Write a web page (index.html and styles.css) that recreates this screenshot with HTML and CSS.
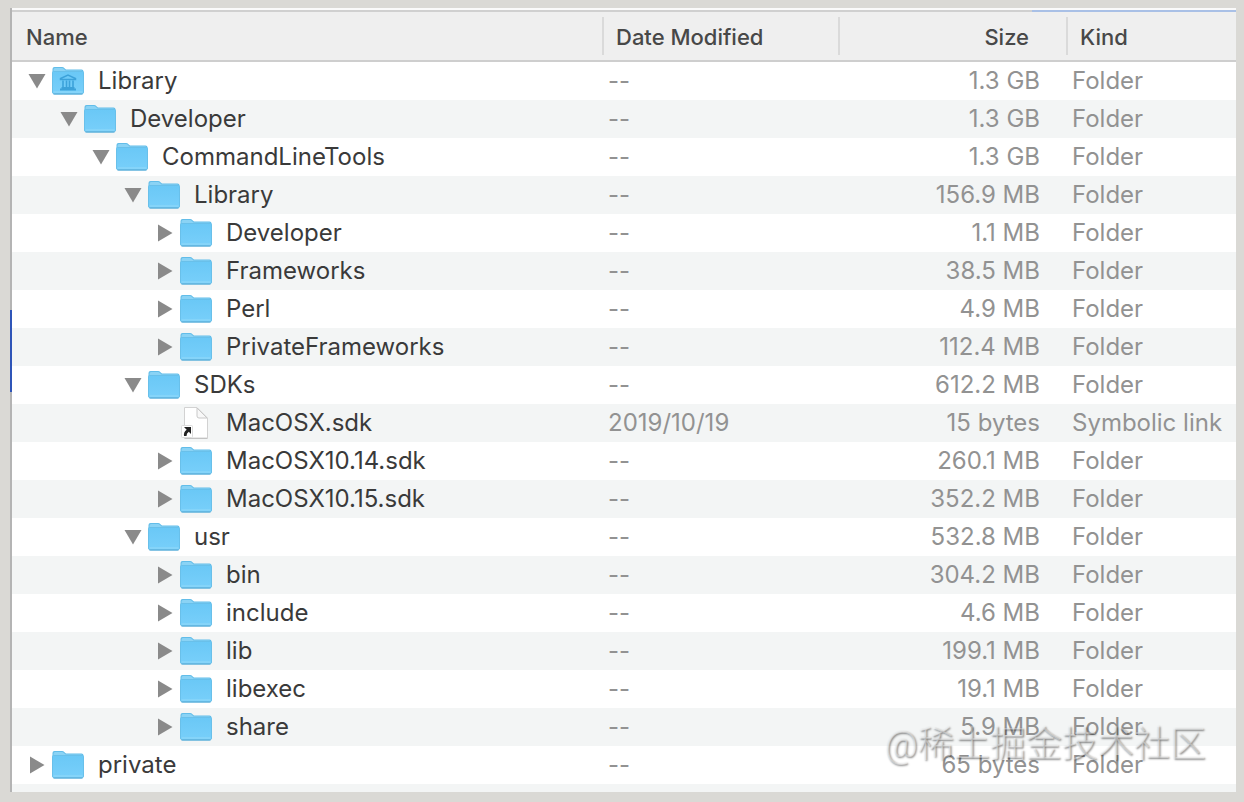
FILE: index.html
```html
<!DOCTYPE html>
<html lang="en">
<head>
    <meta charset="UTF-8">
    <meta name="viewport" content="width=device-width, initial-scale=1.0">
    <title>Library</title>
    <link rel="stylesheet" href="styles.css">
</head>
<body>
    <svg class="sprite" aria-hidden="true">
        <defs>
            <linearGradient id="folderFill" x1="0" y1="0" x2="0" y2="1">
                <stop offset="0" stop-color="#6ac8f6"/>
                <stop offset="1" stop-color="#78cffa"/>
            </linearGradient>
            <symbol id="folder" viewBox="0 0 32 30">
                <path d="M0.5 27V3Q0.5 1 2.5 1H10Q11.5 1 12.5 2.2L14 3.5H29.5Q31.5 3.5 31.5 5.5V27Z" fill="#62bde9"/>
                <path d="M1.5 6V3.5Q1.5 2 3 2H10Q11 2 12 3L13.5 4.5H29Q30.5 4.5 30.5 5.5Z" fill="#8ad3f5"/>
                <path d="M0.5 6.5Q0.5 5.5 1.5 5.5H30.5Q31.5 5.5 31.5 6.5V26Q31.5 28 29.5 28H2.5Q0.5 28 0.5 26Z" fill="url(#folderFill)" stroke="#69c0ea"/>
                <path d="M1.5 26H30.5" stroke="#93daf9"/>
                <path d="M1.5 28H30.5" stroke="#58a9d3"/>
            </symbol>
            <symbol id="library" viewBox="0 0 32 30">
                <use href="#folder"/>
                <path d="M8.5 13.5V12.5L16 9L23.5 12.5V13.5Z" fill="none" stroke="#3ca2da" stroke-width="1.5"/>
                <path d="M11 14.5V21.5M14.5 14.5V21.5M17.5 14.5V21.5M21 14.5V21.5" stroke="#3ca2da" stroke-width="1.6"/>
                <path d="M8 23.5H24M9.5 21.8H22.5" stroke="#3ca2da" stroke-width="1.8"/>
            </symbol>
            <symbol id="alias" viewBox="0 0 32 32">
                <path d="M4.5 0.5H17L27.5 11V31H4.5Z" fill="#fff" stroke="#d2d2d2"/>
                <path d="M17 1V9Q17 11 19 11H27Z" fill="#f8f8f8" stroke="#c8c8c8"/>
                <path d="M4.5 31.5H27.5" stroke="#c2c2c2"/>
                <rect x="1.5" y="18.5" width="11" height="12" rx="1" fill="#fff" stroke="#dcdcdc"/>
                <path d="M4 20H11V27L8.8 24.8Q6.5 26 6.5 29H4Q3.3 25 6.7 22.7Z" fill="#222"/>
            </symbol>
            <symbol id="open" viewBox="0 0 18 18"><path d="M0.5 2H17.5L9 16.5Z" fill="#8a8a8a"/></symbol>
            <symbol id="closed" viewBox="0 0 18 18"><path d="M2 0.5V17.5L16.5 9Z" fill="#8a8a8a"/></symbol>
        </defs>
    </svg>

    <main class="window">
        <table class="files">
            <thead>
                <tr>
                    <th class="col-name" scope="col"><span>Name</span></th>
                    <th class="col-date" scope="col"><span>Date Modified</span></th>
                    <th class="col-size" scope="col"><span>Size</span></th>
                    <th class="col-kind" scope="col"><span>Kind</span></th>
                </tr>
            </thead>
            <tbody>
                <tr><td><div class="item level-0"><button aria-label="Collapse Library"><svg><use href="#open"/></svg></button><svg class="icon"><use href="#library"/></svg>Library</div></td><td>--</td><td>1.3 GB</td><td>Folder</td></tr>
                <tr><td><div class="item level-1"><button aria-label="Collapse Developer"><svg><use href="#open"/></svg></button><svg class="icon"><use href="#folder"/></svg>Developer</div></td><td>--</td><td>1.3 GB</td><td>Folder</td></tr>
                <tr><td><div class="item level-2"><button aria-label="Collapse CommandLineTools"><svg><use href="#open"/></svg></button><svg class="icon"><use href="#folder"/></svg>CommandLineTools</div></td><td>--</td><td>1.3 GB</td><td>Folder</td></tr>
                <tr><td><div class="item level-3"><button aria-label="Collapse Library"><svg><use href="#open"/></svg></button><svg class="icon"><use href="#folder"/></svg>Library</div></td><td>--</td><td>156.9 MB</td><td>Folder</td></tr>
                <tr><td><div class="item level-4"><button aria-label="Expand Developer"><svg><use href="#closed"/></svg></button><svg class="icon"><use href="#folder"/></svg>Developer</div></td><td>--</td><td>1.1 MB</td><td>Folder</td></tr>
                <tr><td><div class="item level-4"><button aria-label="Expand Frameworks"><svg><use href="#closed"/></svg></button><svg class="icon"><use href="#folder"/></svg>Frameworks</div></td><td>--</td><td>38.5 MB</td><td>Folder</td></tr>
                <tr><td><div class="item level-4"><button aria-label="Expand Perl"><svg><use href="#closed"/></svg></button><svg class="icon"><use href="#folder"/></svg>Perl</div></td><td>--</td><td>4.9 MB</td><td>Folder</td></tr>
                <tr><td><div class="item level-4"><button aria-label="Expand PrivateFrameworks"><svg><use href="#closed"/></svg></button><svg class="icon"><use href="#folder"/></svg>PrivateFrameworks</div></td><td>--</td><td>112.4 MB</td><td>Folder</td></tr>
                <tr><td><div class="item level-3"><button aria-label="Collapse SDKs"><svg><use href="#open"/></svg></button><svg class="icon"><use href="#folder"/></svg>SDKs</div></td><td>--</td><td>612.2 MB</td><td>Folder</td></tr>
                <tr><td><div class="item level-4"><span class="no-arrow"></span><svg class="icon file"><use href="#alias"/></svg>MacOSX.sdk</div></td><td>2019/10/19</td><td>15 bytes</td><td>Symbolic link</td></tr>
                <tr><td><div class="item level-4"><button aria-label="Expand MacOSX10.14.sdk"><svg><use href="#closed"/></svg></button><svg class="icon"><use href="#folder"/></svg>MacOSX10.14.sdk</div></td><td>--</td><td>260.1 MB</td><td>Folder</td></tr>
                <tr><td><div class="item level-4"><button aria-label="Expand MacOSX10.15.sdk"><svg><use href="#closed"/></svg></button><svg class="icon"><use href="#folder"/></svg>MacOSX10.15.sdk</div></td><td>--</td><td>352.2 MB</td><td>Folder</td></tr>
                <tr><td><div class="item level-3"><button aria-label="Collapse usr"><svg><use href="#open"/></svg></button><svg class="icon"><use href="#folder"/></svg>usr</div></td><td>--</td><td>532.8 MB</td><td>Folder</td></tr>
                <tr><td><div class="item level-4"><button aria-label="Expand bin"><svg><use href="#closed"/></svg></button><svg class="icon"><use href="#folder"/></svg>bin</div></td><td>--</td><td>304.2 MB</td><td>Folder</td></tr>
                <tr><td><div class="item level-4"><button aria-label="Expand include"><svg><use href="#closed"/></svg></button><svg class="icon"><use href="#folder"/></svg>include</div></td><td>--</td><td>4.6 MB</td><td>Folder</td></tr>
                <tr><td><div class="item level-4"><button aria-label="Expand lib"><svg><use href="#closed"/></svg></button><svg class="icon"><use href="#folder"/></svg>lib</div></td><td>--</td><td>199.1 MB</td><td>Folder</td></tr>
                <tr><td><div class="item level-4"><button aria-label="Expand libexec"><svg><use href="#closed"/></svg></button><svg class="icon"><use href="#folder"/></svg>libexec</div></td><td>--</td><td>19.1 MB</td><td>Folder</td></tr>
                <tr><td><div class="item level-4"><button aria-label="Expand share"><svg><use href="#closed"/></svg></button><svg class="icon"><use href="#folder"/></svg>share</div></td><td>--</td><td>5.9 MB</td><td>Folder</td></tr>
                <tr><td><div class="item level-0"><button aria-label="Expand private"><svg><use href="#closed"/></svg></button><svg class="icon"><use href="#folder"/></svg>private</div></td><td>--</td><td>65 bytes</td><td>Folder</td></tr>
            </tbody>
        </table>
        <div class="next-row"></div>
        <div class="edge-top"></div>
        <div class="edge-left"></div>
        <div class="watermark">@稀土掘金技术社区</div>
    </main>
</body>
</html>
```
FILE: styles.css
```css
* {
    box-sizing: border-box;
}
body {
    margin: 0;
    padding: 8px 8px 10px 10px;
    background-color: #dad9d5;
    color: #3a3a3a;
    font-family: Inter, "Noto Sans CJK SC", sans-serif;
    font-size: 24px;
}
.sprite {
    position: absolute;
    width: 0;
    height: 0;
}
.window {
    position: relative;
    padding-top: 2px;
    border-left: 2px solid #b4b4b4;
    background-color: #fafafa;
}
.files {
    width: 100%;
    table-layout: fixed;
    border-collapse: separate;
    border-spacing: 0;
}
th {
    height: 52px;
    padding: 0;
    border-top: 2px solid #d0d0d0;
    border-bottom: 2px solid #cecece;
    background-color: #efefef;
    color: #484848;
    font-size: 22px;
    font-weight: 500;
    text-align: left;
}
th span {
    display: block;
    height: 38px;
    padding: 0 12px;
    border-left: 2px solid #dadada;
    line-height: 40px;
}
.col-name span {
    padding-left: 14px;
    border-left: 0;
}
.col-date {
    width: 236px;
}
.col-size {
    width: 228px;
    text-align: right;
}
.col-size span {
    padding-right: 37px;
}
.col-kind {
    width: 170px;
}
/* Rows */
tbody tr {
    background-color: #fff;
}
tbody tr:nth-child(even),
.next-row {
    background-color: #f3f5f5;
}
td {
    height: 38px;
    padding: 0 6px;
    color: #929292;
    line-height: 38px;
    white-space: nowrap;
}
td:first-child {
    padding: 0;
    color: #3a3a3a;
}
td:nth-child(3) {
    padding-right: 26px;
    text-align: right;
}
.next-row {
    height: 8px;
}
.item {
    display: flex;
    align-items: center;
    height: 38px;
}
.level-0 { padding-left: 16px; }
.level-1 { padding-left: 48px; }
.level-2 { padding-left: 80px; }
.level-3 { padding-left: 112px; }
.level-4 { padding-left: 144px; }
.item button,
.no-arrow {
    width: 18px;
    height: 18px;
    margin-right: 6px;
    padding: 0;
    border: 0;
    background: none;
}
.item button svg {
    display: block;
    width: 18px;
    height: 18px;
}
.icon {
    width: 32px;
    height: 30px;
    margin-right: 14px;
    margin-bottom: 1px;
}
.icon.file {
    height: 32px;
}
/* Parts of the windows behind that show at the edges */
.edge-top {
    position: absolute;
    top: 2px;
    right: 0;
    width: 204px;
    height: 2px;
    background-color: #a9c0e6;
}
.edge-left {
    position: absolute;
    top: 302px;
    left: -2px;
    width: 2px;
    height: 82px;
    background-color: #2f55b8;
}
.watermark {
    position: absolute;
    right: 30px;
    bottom: 21px;
    color: rgba(255, 255, 255, 0.4);
    font-family: Roboto, "Noto Sans CJK SC", sans-serif;
    font-size: 36px;
    font-weight: 300;
    line-height: 52px;
    text-shadow: 1px 1px 2px rgba(0, 0, 0, 0.5);
    pointer-events: none;
}
```
